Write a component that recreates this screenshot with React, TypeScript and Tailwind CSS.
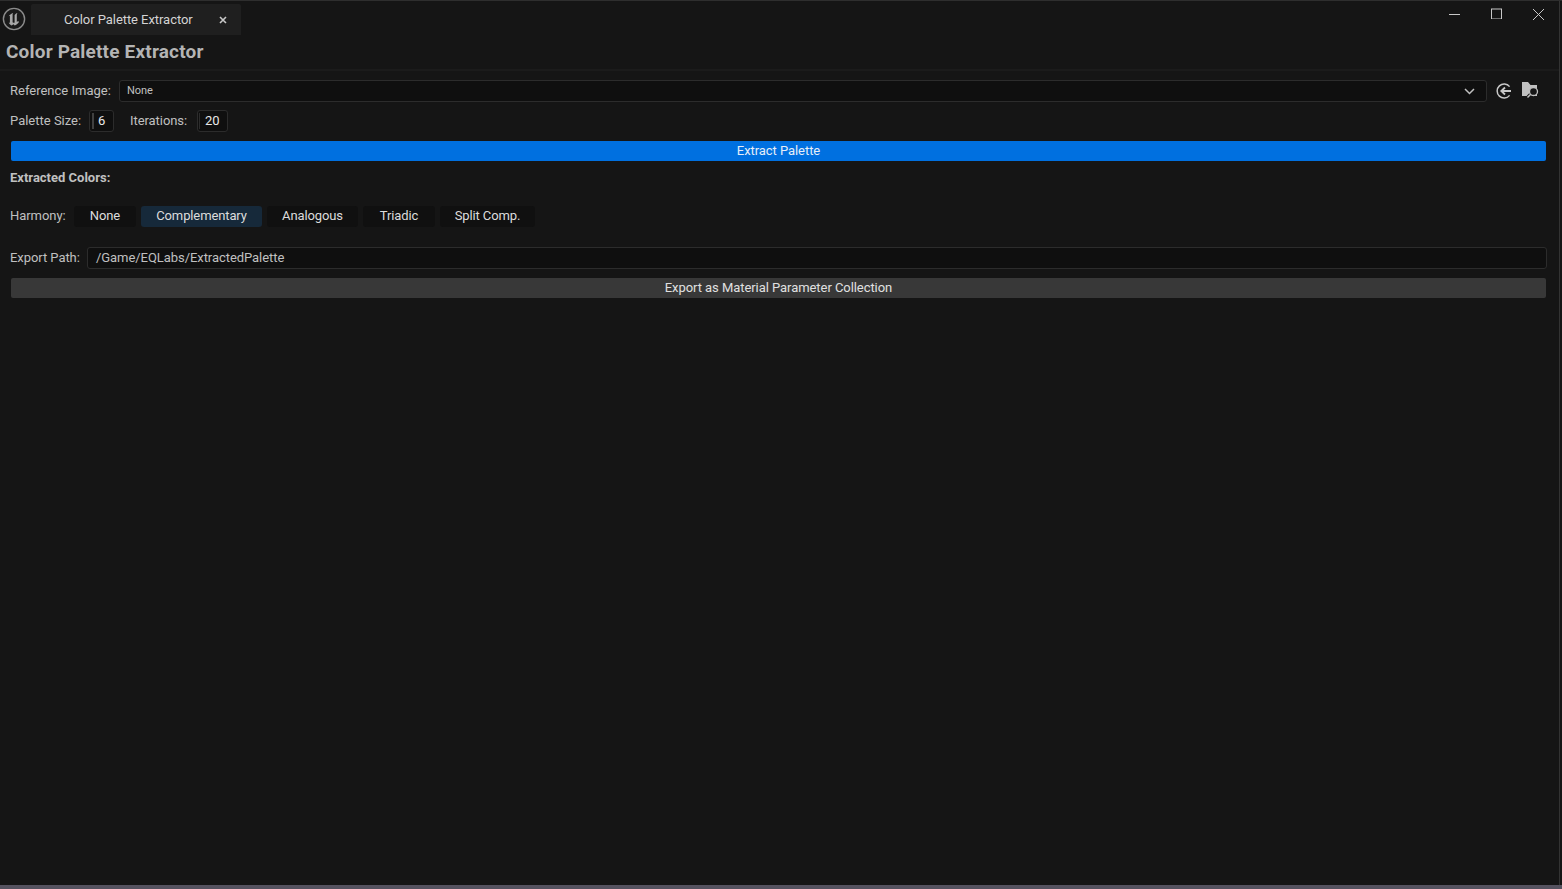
import React from 'react';

const harmonies = [
  { label: 'None', width: 'w-[62px]', active: false },
  { label: 'Complementary', width: 'w-[121px]', active: true },
  { label: 'Analogous', width: 'w-[91px]', active: false },
  { label: 'Triadic', width: 'w-[72px]', active: false },
  { label: 'Split Comp.', width: 'w-[95px]', active: false },
];

function UnrealLogo() {
  return (
    <svg width="24" height="24" viewBox="0 0 24 24" fill="none">
      <circle cx="12" cy="12" r="10.6" fill="#1a1a1a" stroke="#8c8c8c" strokeWidth="1.4" />
      <path
        d="M10.2 6.200C8.600 7 7.300 8.100 6.700 9.300l1.200-.5v6.400c0 .6-.5.8-1.200.4.6 1.300 1.700 2.300 3 2.900l1.700-1.300 1.300 1.300c1.500-.5 3-1.700 4.300-3.500l-.9-.9-1.300.9V7.900c0-.8.300-1.300.8-1.900-1.300.4-2.400 1.200-3 2.100v7.400c-.6.400-1.300.3-2-.3V8c0-.6 0-1.100.6-1.800z"
        fill="#a8a8a8"
      />
    </svg>
  );
}

function BrowseIcon() {
  return (
    <svg width="18" height="18" viewBox="0 0 18 18" fill="none">
      <path d="M1 1h6l2.500 3H16v11H1z" fill="#c0c0c0" />
      <path d="M9.700 13.300L7 16" stroke="#151515" strokeWidth="3.500" />
      <circle cx="12.500" cy="10.500" r="4" fill="#151515" stroke="#c0c0c0" strokeWidth="1.300" />
      <path d="M9.700 13.300L6.500 16.500" stroke="#c0c0c0" strokeWidth="1.500" />
    </svg>
  );
}

function UseSelectedIcon() {
  return (
    <svg width="16" height="16" viewBox="0 0 16 16" fill="none" stroke="#c8c8c8">
      <path d="M13.600 3.600A7 7 0 1 0 13.600 12.400" strokeWidth="1.500" />
      <path d="M15 8H5.500M9 4.500L5.300 8 9 11.500" strokeWidth="1.800" />
    </svg>
  );
}

export default function App() {
  return (
    <div className="w-[1562px] h-[889px] overflow-hidden flex flex-col bg-[#151515] text-[13px] tracking-[-0.06px] text-[#c0c0c0] font-['Roboto',sans-serif] border-t border-t-[#2e2e2e]">
      <div className="flex-1 flex flex-col min-h-0 mr-[2px] border-r border-r-[#333333]">
        {/* Title bar */}
        <div className="h-[34px] shrink-0 flex items-end pl-[2px]">
          <div className="self-center mb-[-1px] mr-[5px]">
            <UnrealLogo />
          </div>
          <div className="w-[210px] h-[31px] bg-[#1f1f1f] rounded-t-[2px] flex items-center pl-[33px] pr-[14px] justify-between text-[#d4d4d4]">
            <span>Color Palette Extractor</span>
            <svg width="8" height="8" viewBox="0 0 8 8" stroke="#c8c8c8" strokeWidth="1.600">
              <path d="M1 1l6 6M7 1L1 7" />
            </svg>
          </div>
          <div className="flex-1 self-start flex justify-end pt-[7px] pr-[15px] gap-[31px]">
            <svg width="11" height="11" viewBox="0 0 11 11" stroke="#c8c8c8">
              <path d="M0 6.500h11" />
            </svg>
            <svg width="11" height="11" viewBox="0 0 11 11" fill="none" stroke="#c8c8c8">
              <rect x="0.500" y="1" width="10" height="10" />
            </svg>
            <svg width="11" height="12" viewBox="0 0 11 12" stroke="#c8c8c8">
              <path d="M0 1l11 11M11 1L0 12" />
            </svg>
          </div>
        </div>

        {/* Heading */}
        <div className="h-[36px] shrink-0 pl-[6px] pb-[1px] flex items-center border-b-2 border-b-[#1b1b1b]">
          <h1 className="text-[19px] tracking-[0.18px] font-bold text-[#b4b4b4] leading-none">Color Palette Extractor</h1>
        </div>

        {/* Form */}
        <div className="flex flex-col pl-[10px] pr-[12px] pt-[9px]">
          <div className="h-[22px] flex items-center">
            <span className="w-[109px] shrink-0 tracking-normal">Reference Image:</span>
            <div className="w-[1368px] h-[22px] bg-[#0f0f0f] border border-[#2c2c2c] rounded-[3px] flex items-center justify-between pl-[7px] pr-[11px] text-[11px]">
              <span>None</span>
              <svg width="11" height="7" viewBox="0 0 11 7" fill="none" stroke="#c0c0c0" strokeWidth="1.500">
                <path d="M1 1l4.500 4.500L10 1" />
              </svg>
            </div>
            <div className="ml-[9px]">
              <UseSelectedIcon />
            </div>
            <div className="ml-[9px] mt-[-2px]">
              <BrowseIcon />
            </div>
          </div>

          <div className="h-[22px] mt-[8px] flex items-center">
            <span className="w-[79px] shrink-0 tracking-normal">Palette Size:</span>
            <div className="w-[25px] h-[22px] bg-[#0f0f0f] border border-[#2c2c2c] rounded-[3px] flex items-center pl-[2px] text-[#e8e8e8]">
              <div className="w-[2px] h-[16px] bg-[#404040] mr-[4px]" />
              <span>6</span>
            </div>
            <span className="ml-[16px] w-[67px] shrink-0">Iterations:</span>
            <div className="w-[31px] h-[22px] bg-[#0f0f0f] border border-[#2c2c2c] rounded-[3px] flex items-center pl-[1px] text-[#e8e8e8]">
              <div className="w-[1px] h-[16px] bg-[#2c2c2c] mr-[5px]" />
              <span>20</span>
            </div>
          </div>

          <button className="h-[20px] mt-[9px] mx-[1px] bg-[#0070e0] rounded-[2px] text-[#e6eef8] flex items-center justify-center">
            Extract Palette
          </button>

          <div className="h-[16px] mt-[9px] font-bold tracking-normal flex items-center">Extracted Colors:</div>

          <div className="h-[22px] mt-[19px] flex items-center">
            <span className="w-[64px] shrink-0">Harmony:</span>
            <div className="flex gap-[5px] tracking-[-0.12px]">
              {harmonies.map((h) => (
                <div
                  key={h.label}
                  className={`${h.width} h-[21px] rounded-[3px] flex items-center justify-center text-[#dcdcdc] ${
                    h.active ? 'bg-[#16293a]' : 'bg-[#101010]'
                  }`}
                >
                  {h.label}
                </div>
              ))}
            </div>
          </div>

          <div className="h-[22px] mt-[20px] flex items-center">
            <span className="w-[77px] shrink-0">Export Path:</span>
            <div className="flex-1 h-[22px] bg-[#0f0f0f] border border-[#2c2c2c] rounded-[3px] flex items-center pl-[8px]">
              /Game/EQLabs/ExtractedPalette
            </div>
          </div>

          <button className="h-[20px] mt-[9px] mx-[1px] bg-[#383838] rounded-[2px] text-[#e0e0e0] flex items-center justify-center">
            Export as Material Parameter Collection
          </button>
        </div>
      </div>
      <div className="h-[4px] shrink-0 bg-[#55525f]" />
    </div>
  );
}
